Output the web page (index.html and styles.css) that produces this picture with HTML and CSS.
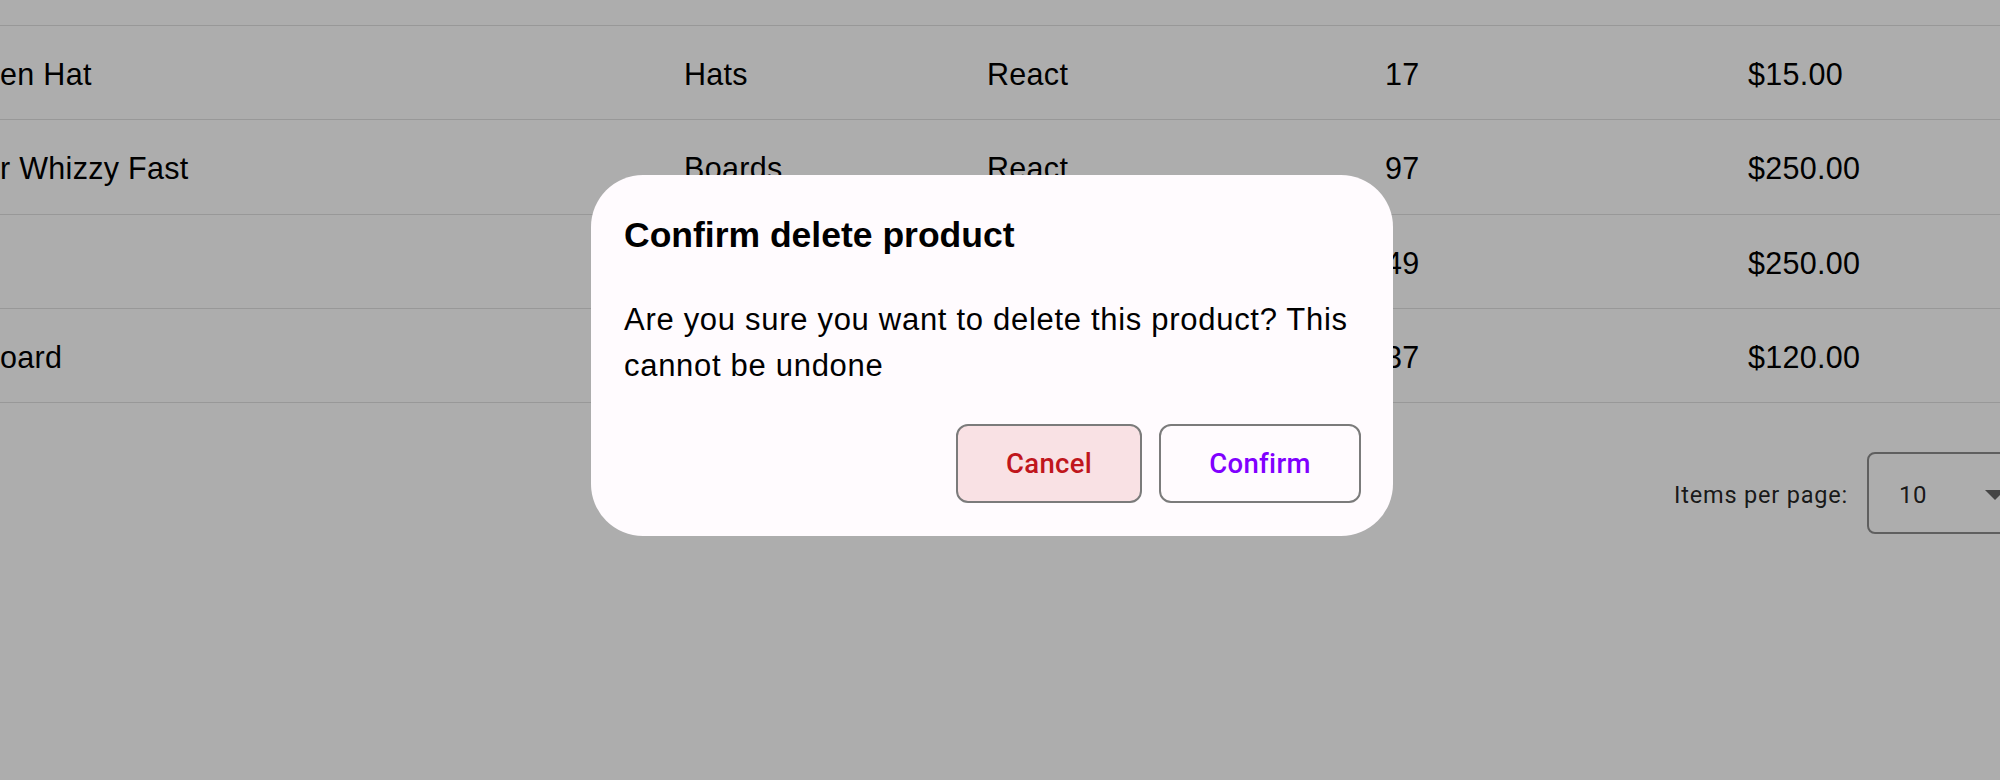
FILE: index.html
```html
<!DOCTYPE html>
<html lang="en">
<head>
<meta charset="utf-8">
<title>Products</title>
<link rel="stylesheet" href="styles.css">
</head>
<body>
<div class="page">
  <div class="table">
    <div class="thead"></div>
    <div class="row">
      <div class="cell">en Hat</div>
      <div class="cell">Hats</div>
      <div class="cell">React</div>
      <div class="cell">17</div>
      <div class="cell">$15.00</div>
    </div>
    <div class="row">
      <div class="cell">r Whizzy Fast</div>
      <div class="cell">Boards</div>
      <div class="cell">React</div>
      <div class="cell">97</div>
      <div class="cell">$250.00</div>
    </div>
    <div class="row">
      <div class="cell"></div>
      <div class="cell"></div>
      <div class="cell"></div>
      <div class="cell">49</div>
      <div class="cell">$250.00</div>
    </div>
    <div class="row">
      <div class="cell">oard</div>
      <div class="cell"></div>
      <div class="cell"></div>
      <div class="cell">37</div>
      <div class="cell">$120.00</div>
    </div>
  </div>
  <div class="paginator">
    <span class="pag-label">Items per page:</span>
    <div class="pag-select">
      <span class="pag-value">10</span>
      <span class="pag-arrow"></span>
    </div>
  </div>
</div>

<div class="overlay"></div>
<div class="dialog" role="dialog">
  <h2 class="dialog-title">Confirm delete product</h2>
  <p class="dialog-text">Are you sure you want to delete this product? This cannot be undone</p>
  <div class="dialog-actions">
    <button class="btn btn-cancel">Cancel</button>
    <button class="btn btn-confirm">Confirm</button>
  </div>
</div>
</body>
</html>
```

FILE: styles.css
```css
html, body {
  margin: 0;
  padding: 0;
}
body {
  width: 2000px;
  height: 780px;
  overflow: hidden;
  background: #ffffff;
  position: relative;
  font-family: "Liberation Sans", Arial, sans-serif;
  color: #000;
}
.page {
  width: 2060px;
}
.thead {
  height: 26px;
  box-sizing: border-box;
  border-bottom: 1px solid rgba(0, 0, 0, 0.12);
}
.row {
  display: grid;
  grid-template-columns: 684px 303px 398px 363px 1fr;
  height: 94.33px;
  box-sizing: border-box;
  border-bottom: 1px solid rgba(0, 0, 0, 0.12);
  align-items: center;
  padding-top: 4px;
  font-size: 30.5px;
  letter-spacing: 0.3px;
}
.cell {
  white-space: nowrap;
}
.paginator {
  display: flex;
  justify-content: flex-end;
  align-items: center;
  gap: 19px;
  padding-top: 49px;
  font-family: Roboto, "Liberation Sans", sans-serif;
  color: rgba(0, 0, 0, 0.87);
}
.pag-label {
  font-size: 23.5px;
  letter-spacing: 0.8px;
  padding-top: 4px;
}
.pag-select {
  width: 193px;
  height: 82px;
  box-sizing: border-box;
  border: 2px solid rgba(0, 0, 0, 0.45);
  border-radius: 8px;
  display: flex;
  align-items: center;
  padding-left: 30px;
  padding-top: 4px;
  gap: 58px;
}
.pag-value {
  font-size: 24px;
  letter-spacing: 0.5px;
}
.pag-arrow {
  width: 0;
  height: 0;
  border-left: 10px solid transparent;
  border-right: 10px solid transparent;
  border-top: 10px solid rgba(0, 0, 0, 0.6);
}
.overlay {
  position: absolute;
  inset: 0;
  background: rgba(0, 0, 0, 0.32);
}
.dialog {
  position: absolute;
  left: 591px;
  top: 175px;
  width: 802px;
  box-sizing: border-box;
  padding: 39px 32px 33px 33px;
  background: #fffbfe;
  border-radius: 52px;
}
.dialog-title {
  margin: 0;
  font-size: 35.5px;
  line-height: 42.6px;
  font-weight: 700;
}
.dialog-text {
  margin: 40px 0 0 0;
  font-size: 31px;
  letter-spacing: 0.7px;
  line-height: 46.6px;
}
.dialog-actions {
  display: flex;
  justify-content: flex-end;
  gap: 17px;
  margin-top: 34px;
}
.btn {
  height: 79px;
  box-sizing: border-box;
  padding: 0 48px;
  border: 2px solid #7b7b7b;
  border-radius: 12px;
  font-family: Roboto, "Liberation Sans", sans-serif;
  font-weight: 500;
  font-size: 27.5px;
  letter-spacing: 0.3px;
  background: #fffbfe;
}
.btn-cancel {
  width: 186px;
  background: #f9e1e4;
  color: #c0161c;
}
.btn-confirm {
  width: 202px;
  color: #8000ff;
}
```
